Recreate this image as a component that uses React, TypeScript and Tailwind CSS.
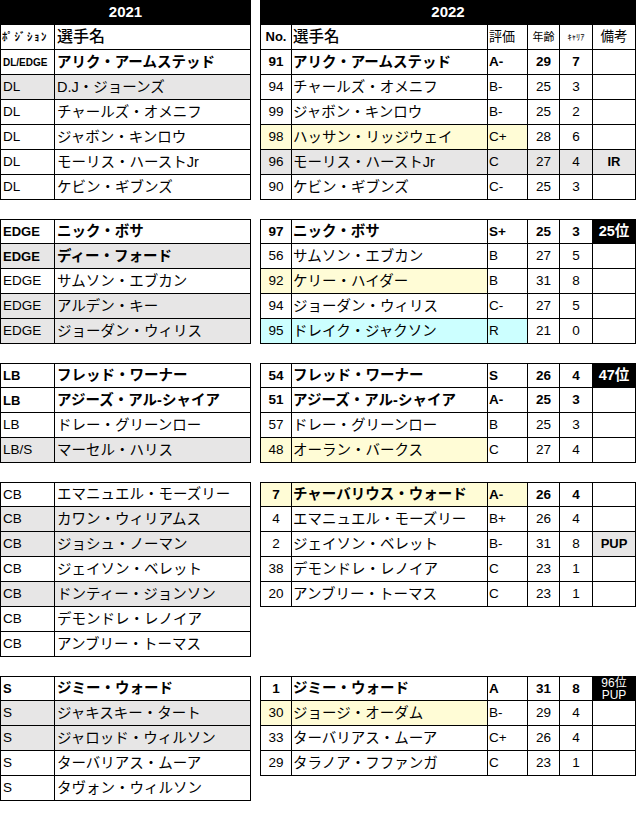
import React from "react";

type L = { pos: string; name: string; bold?: boolean; gray?: boolean; small?: boolean };
type R = {
  no: string;
  name: string;
  rating: string;
  age: string;
  career: string;
  bold?: boolean;
  hl?: "y2" | "y3" | "c3" | "gray";
  note?: string;
  noteKind?: "black" | "gray" | "black2" | "plain";
};

const leftBlocks: L[][] = [
  [
    { pos: "DL/EDGE", name: "アリク・アームステッド", bold: true, small: true },
    { pos: "DL", name: "D.J・ジョーンズ", gray: true },
    { pos: "DL", name: "チャールズ・オメニフ" },
    { pos: "DL", name: "ジャボン・キンロウ" },
    { pos: "DL", name: "モーリス・ハーストJr" },
    { pos: "DL", name: "ケビン・ギブンズ" },
  ],
  [
    { pos: "EDGE", name: "ニック・ボサ", bold: true },
    { pos: "EDGE", name: "ディー・フォード", bold: true, gray: true },
    { pos: "EDGE", name: "サムソン・エブカン" },
    { pos: "EDGE", name: "アルデン・キー", gray: true },
    { pos: "EDGE", name: "ジョーダン・ウィリス", gray: true },
  ],
  [
    { pos: "LB", name: "フレッド・ワーナー", bold: true },
    { pos: "LB", name: "アジーズ・アル-シャイア", bold: true },
    { pos: "LB", name: "ドレー・グリーンロー" },
    { pos: "LB/S", name: "マーセル・ハリス", gray: true },
  ],
  [
    { pos: "CB", name: "エマニュエル・モーズリー" },
    { pos: "CB", name: "カワン・ウィリアムス", gray: true },
    { pos: "CB", name: "ジョシュ・ノーマン", gray: true },
    { pos: "CB", name: "ジェイソン・ベレット" },
    { pos: "CB", name: "ドンティー・ジョンソン", gray: true },
    { pos: "CB", name: "デモンドレ・レノイア" },
    { pos: "CB", name: "アンブリー・トーマス" },
  ],
  [
    { pos: "S", name: "ジミー・ウォード", bold: true },
    { pos: "S", name: "ジャキスキー・タート", gray: true },
    { pos: "S", name: "ジャロッド・ウィルソン", gray: true },
    { pos: "S", name: "ターバリアス・ムーア" },
    { pos: "S", name: "タヴォン・ウィルソン" },
  ],
];

const rightBlocks: R[][] = [
  [
    { no: "91", name: "アリク・アームステッド", rating: "A-", age: "29", career: "7", bold: true },
    { no: "94", name: "チャールズ・オメニフ", rating: "B-", age: "25", career: "3" },
    { no: "99", name: "ジャボン・キンロウ", rating: "B-", age: "25", career: "2" },
    { no: "98", name: "ハッサン・リッジウェイ", rating: "C+", age: "28", career: "6", hl: "y3" },
    { no: "96", name: "モーリス・ハーストJr", rating: "C", age: "27", career: "4", hl: "gray", note: "IR", noteKind: "plain" },
    { no: "90", name: "ケビン・ギブンズ", rating: "C-", age: "25", career: "3" },
  ],
  [
    { no: "97", name: "ニック・ボサ", rating: "S+", age: "25", career: "3", bold: true, note: "25位", noteKind: "black" },
    { no: "56", name: "サムソン・エブカン", rating: "B", age: "27", career: "5" },
    { no: "92", name: "ケリー・ハイダー", rating: "B", age: "31", career: "8", hl: "y2" },
    { no: "94", name: "ジョーダン・ウィリス", rating: "C-", age: "27", career: "5" },
    { no: "95", name: "ドレイク・ジャクソン", rating: "R", age: "21", career: "0", hl: "c3" },
  ],
  [
    { no: "54", name: "フレッド・ワーナー", rating: "S", age: "26", career: "4", bold: true, note: "47位", noteKind: "black" },
    { no: "51", name: "アジーズ・アル-シャイア", rating: "A-", age: "25", career: "3", bold: true },
    { no: "57", name: "ドレー・グリーンロー", rating: "B", age: "25", career: "3" },
    { no: "48", name: "オーラン・バークス", rating: "C", age: "27", career: "4", hl: "y2" },
  ],
  [
    { no: "7", name: "チャーバリウス・ウォード", rating: "A-", age: "26", career: "4", bold: true, hl: "y3" },
    { no: "4", name: "エマニュエル・モーズリー", rating: "B+", age: "26", career: "4" },
    { no: "2", name: "ジェイソン・ベレット", rating: "B-", age: "31", career: "8", note: "PUP", noteKind: "gray" },
    { no: "38", name: "デモンドレ・レノイア", rating: "C", age: "23", career: "1" },
    { no: "20", name: "アンブリー・トーマス", rating: "C", age: "23", career: "1" },
  ],
  [
    { no: "1", name: "ジミー・ウォード", rating: "A", age: "31", career: "8", bold: true, note: "96位\nPUP", noteKind: "black2" },
    { no: "30", name: "ジョージ・オーダム", rating: "B-", age: "29", career: "4", hl: "y2" },
    { no: "33", name: "ターバリアス・ムーア", rating: "C+", age: "26", career: "4" },
    { no: "29", name: "タラノア・フファンガ", rating: "C", age: "23", career: "1" },
  ],
];

const GRAY = "bg-[#e7e6e6]";
const YEL = "bg-[#fffcd6]";
const CYAN = "bg-[#ccffff]";

function LeftBlock({ rows, first }: { rows: L[]; first?: boolean }) {
  return (
    <div className={first ? "w-[251px] border-l border-black" : "w-[251px] border-l border-t border-black"}>
      {first && (
        <div className="flex h-[25px] border-b border-black bg-white">
          <div className="flex h-full w-[54px] items-center border-r border-black pl-[1px] text-[11px] font-bold tracking-[1.5px] text-black">
            ﾎﾟｼﾞｼｮﾝ
          </div>
          <div className="flex h-full w-[196px] items-center border-r border-black pl-[2px] text-[16px] font-medium text-black">
            選手名
          </div>
        </div>
      )}
      {rows.map((r, i) => (
        <div
          key={i}
          className={
            (i === 0 && !first ? "h-[24px] " : "h-[25px] ") +
            "flex border-b border-black " +
            (r.gray ? GRAY : "bg-white")
          }
        >
          <div
            className={
              "flex h-full w-[54px] items-center border-r border-black pl-[2px] pt-[1px] text-black " +
              (r.small ? "text-[10px] font-bold" : r.bold ? "text-[13px] font-bold" : "text-[13.5px]")
            }
          >
            {r.pos}
          </div>
          <div
            className={
              "flex h-full w-[196px] items-center whitespace-nowrap border-r border-black pl-[2px] pt-[1px] text-[14.5px] text-black " +
              (r.bold ? "font-bold" : "")
            }
          >
            {r.name}
          </div>
        </div>
      ))}
    </div>
  );
}

function RightBlock({ rows, first }: { rows: R[]; first?: boolean }) {
  return (
    <div className={first ? "w-[376px] border-l border-black" : "w-[376px] border-l border-t border-black"}>
      {first && (
        <div className="flex h-[25px] border-b border-black bg-white text-black">
          <div className="flex h-full w-[31px] items-center justify-center border-r border-black text-[13px] font-bold">No.</div>
          <div className="flex h-full w-[196px] items-center border-r border-black pl-[1px] text-[15.5px] font-medium">選手名</div>
          <div className="flex h-full w-[40px] items-center border-r border-black pl-[1px] text-[13px]">評価</div>
          <div className="flex h-full w-[32px] items-center justify-center border-r border-black text-[11px]">年齢</div>
          <div className="flex h-full w-[33px] items-center justify-center border-r border-black text-[8.5px]">ｷｬﾘｱ</div>
          <div className="flex h-full w-[43px] items-center justify-center border-r border-black text-[13.5px]">備考</div>
        </div>
      )}
      {rows.map((r, i) => {
        const rowBg = r.hl === "gray" ? GRAY : "bg-white";
        const hlBg = r.hl === "y2" || r.hl === "y3" ? YEL : r.hl === "c3" ? CYAN : "";
        const ratBg = r.hl === "y3" ? YEL : r.hl === "c3" ? CYAN : "";
        const b = r.bold ? " font-bold" : "";
        let noteCls = "";
        if (r.noteKind === "black") noteCls = " bg-black text-white font-bold text-[14.5px]";
        else if (r.noteKind === "black2") noteCls = " bg-black text-white text-[12px] leading-[12px]";
        else if (r.noteKind === "gray") noteCls = " bg-[#e7e6e6] font-bold text-[13px]";
        else if (r.noteKind === "plain") noteCls = " font-bold text-[13px]";
        return (
          <div
            key={i}
            className={(i === 0 && !first ? "h-[24px] " : "h-[25px] ") + "flex border-b border-black text-black " + rowBg}
          >
            <div className={"flex h-full w-[31px] items-center justify-center border-r border-black pt-[1px] text-[13.5px] " + hlBg + b}>
              {r.no}
            </div>
            <div className={"flex h-full w-[196px] items-center whitespace-nowrap border-r border-black pl-[1px] pt-[1px] text-[14.5px] " + hlBg + b}>
              {r.name}
            </div>
            <div className={"flex h-full w-[40px] items-center border-r border-black pl-[1px] pt-[1px] text-[13.5px] " + ratBg + b}>
              {r.rating}
            </div>
            <div className={"flex h-full w-[32px] items-center justify-center border-r border-black pt-[1px] text-[13.5px]" + b}>
              {r.age}
            </div>
            <div className={"flex h-full w-[33px] items-center justify-center border-r border-black pt-[1px] text-[13.5px]" + b}>
              {r.career}
            </div>
            <div className={"flex h-full w-[43px] flex-col items-center justify-center whitespace-pre text-center border-r border-black" + noteCls}>
              {r.note ?? ""}
            </div>
          </div>
        );
      })}
    </div>
  );
}

export default function App() {
  return (
    <div className="h-[834px] w-[640px] bg-white font-['Liberation_Sans','Noto_Sans_CJK_JP',sans-serif] text-black">
      <div className="flex items-start gap-[9px]">
        <div className="flex h-[25px] w-[251px] items-center justify-center bg-black text-[15px] font-bold text-white">2021</div>
        <div className="flex h-[25px] w-[376px] items-center justify-center bg-black text-[15px] font-bold text-white">2022</div>
      </div>
      <div className="flex flex-col gap-[19px]">
        {leftBlocks.map((lb, i) => (
          <div key={i} className="flex items-start gap-[9px]">
            <LeftBlock rows={lb} first={i === 0} />
            <RightBlock rows={rightBlocks[i]} first={i === 0} />
          </div>
        ))}
      </div>
    </div>
  );
}
